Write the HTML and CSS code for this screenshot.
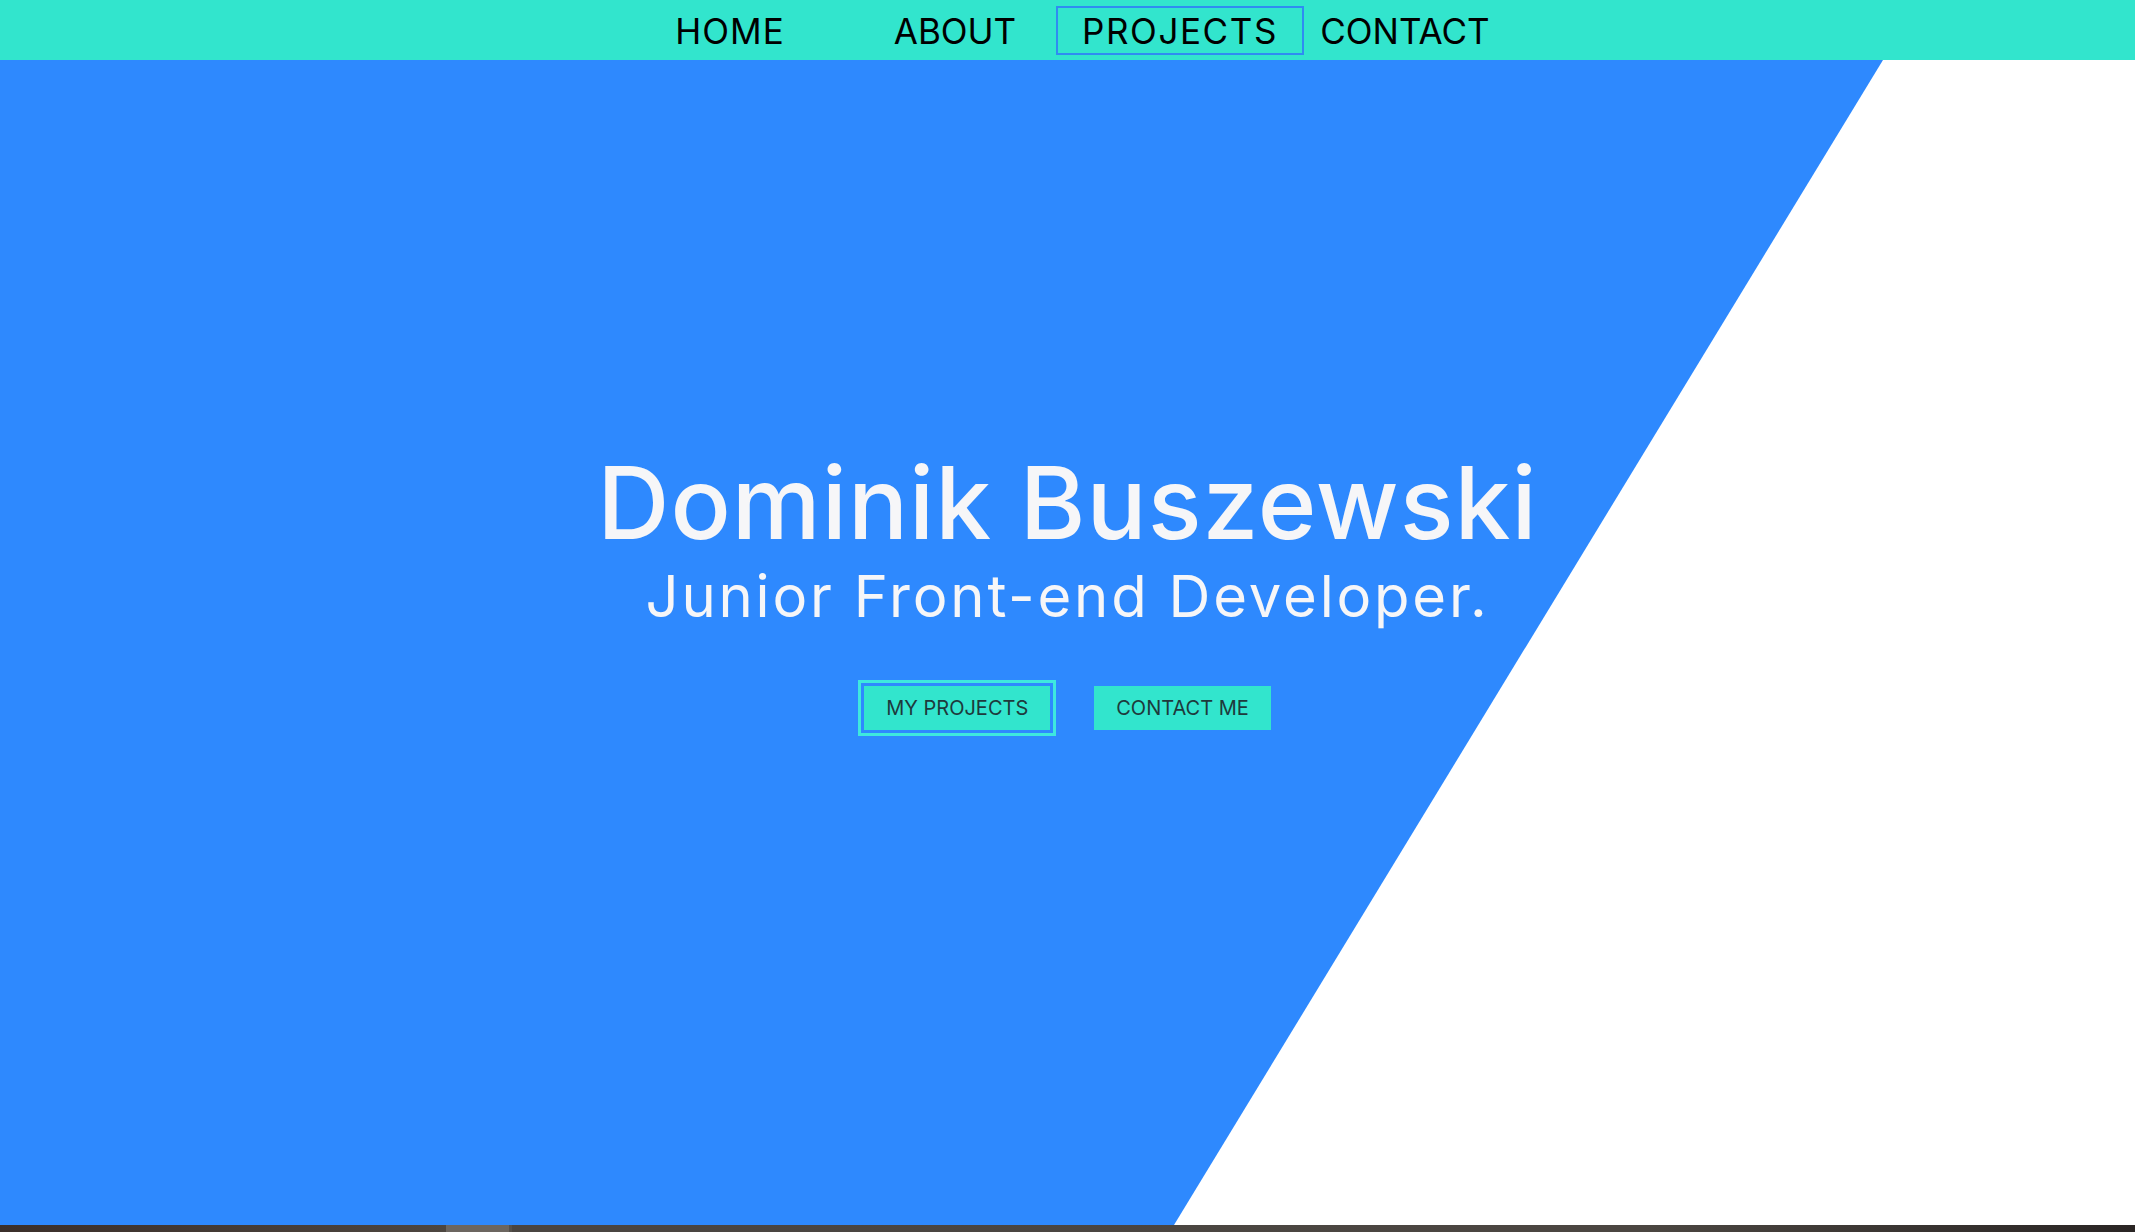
FILE: index.html
```html
<!DOCTYPE html>
<html lang="en">
<head>
<meta charset="utf-8">
<title>Dominik Buszewski</title>
<link rel="stylesheet" href="styles.css">
</head>
<body>
<header class="topbar">
  <nav>
    <ul class="menu">
      <li class="menu-item"><a class="menu-link" href="#home">HOME</a></li>
      <li class="menu-item"><a class="menu-link" href="#about">ABOUT</a></li>
      <li class="menu-item"><a class="menu-link menu-link--active" href="#projects">PROJECTS</a></li>
      <li class="menu-item"><a class="menu-link" href="#contact">CONTACT</a></li>
    </ul>
  </nav>
</header>
<main class="hero">
  <div class="hero-content">
    <h1 class="hero-title">Dominik Buszewski</h1>
    <p class="hero-subtitle">Junior Front-end Developer.</p>
    <div class="hero-actions">
      <a class="btn btn--focus" href="#projects">MY PROJECTS</a>
      <a class="btn" href="#contact">CONTACT ME</a>
    </div>
  </div>
</main>
<div class="dock">
  <span class="dock-seg dock-seg--a"></span>
  <span class="dock-seg dock-seg--thumb"></span>
  <span class="dock-seg dock-seg--b"></span>
</div>
</body>
</html>
```

FILE: styles.css
```css
* { box-sizing: border-box; }
html, body { margin: 0; padding: 0; }
body {
  width: 2135px;
  height: 1232px;
  overflow: hidden;
  font-family: Inter, "Liberation Sans", sans-serif;
  background: #ffffff;
}
.topbar {
  height: 60px;
  background: #32e5cd;
  display: flex;
  justify-content: center;
  align-items: center;
}
.menu {
  list-style: none;
  margin: 0;
  padding: 0;
  display: flex;
}
.menu-item {
  width: 225px;
  display: flex;
  justify-content: center;
}
.menu-link {
  display: inline-block;
  color: #000;
  text-decoration: none;
  font-size: 35px;
  font-weight: 400;
  line-height: 43px;
  padding: 2px 24px 0;
  border: 2px solid transparent;
  white-space: nowrap;
}
.menu-item:first-child .menu-link { letter-spacing: 1px; }
.menu-link--active {
  border-color: #2f8cf2;
  letter-spacing: 1.6px;
}

.hero {
  position: relative;
  height: 1165px;
  overflow: hidden;
}
.hero::before {
  content: "";
  position: absolute;
  inset: 0;
  background: #2e89fe;
  clip-path: polygon(0 0, 1883px 0, 1174px 100%, 0 100%);
}
.hero-content {
  position: relative;
  display: flex;
  flex-direction: column;
  align-items: center;
  padding-top: 393px;
  color: #f6f6f8;
}
.hero-title {
  margin: 0;
  font-size: 100px;
  line-height: 100px;
  font-weight: 500;
  letter-spacing: 1px;
}
.hero-subtitle {
  margin: 14px 0 0;
  font-size: 58px;
  line-height: 58px;
  font-weight: 400;
  letter-spacing: 2.8px;
}
.hero-actions {
  display: flex;
  gap: 44px;
  margin-top: 61px;
}
.btn {
  display: flex;
  align-items: center;
  justify-content: center;
  height: 44px;
  padding: 0 22px;
  background: #32e5cd;
  color: #1e3a3c;
  text-decoration: none;
  font-size: 20px;
  white-space: nowrap;
}
.btn--focus {
  outline: 3px solid #3ee8de;
  outline-offset: 3px;
}
.dock {
  height: 7px;
  display: flex;
  background: #443f3b;
}
.dock-seg--a { width: 446px; background: linear-gradient(90deg, #3b2f2a, #4d4640); }
.dock-seg--thumb { width: 66px; background: #6c6660; border-right: 3px solid #55504b; }
.dock-seg--b { flex: 1; background: linear-gradient(90deg, #4a4541, #4b4641 70%, #2a2524); }
```
